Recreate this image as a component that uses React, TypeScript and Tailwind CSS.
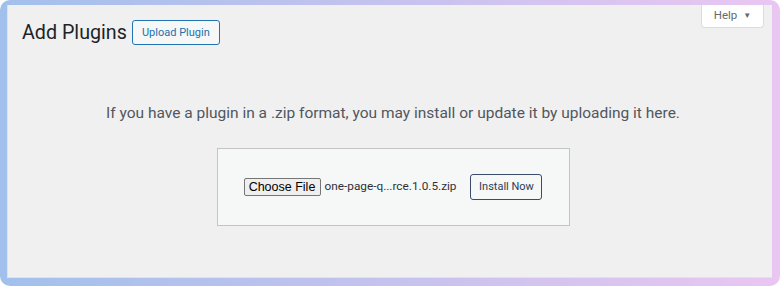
import React from "react";

export default function App() {
  const wp = { fontFamily: 'Roboto, "Noto Sans", Arial, sans-serif' };
  return (
    <div className="w-[780px] h-[286px] rounded-[10px] pt-[5px] pl-[7px] pr-[8px] pb-[8px] bg-gradient-to-r from-[#a2c0ec] via-[#c5c2ee] to-[#eac6f2]">
      <div className="w-full h-full bg-[#f0f0f1] border-l border-b border-[#e2e2e4] flex flex-col" style={wp}>
        <div className="flex items-start justify-between">
          <div className="flex items-center gap-[5px] pl-[14px] pt-[15px]">
            <h1 className="text-[19.7px] leading-[25px] text-[#1d2327] font-normal">Add Plugins</h1>
            <button className="h-[25px] w-[88px] border border-[#2271b1] rounded-[3px] bg-[#f6f7f7] text-[#2271b1] text-[11px] leading-[23px]">
              Upload Plugin
            </button>
          </div>
          <div className="mr-[8px] w-[63px] h-[23px] bg-white border border-t-0 border-[#dcdcde] rounded-b-[4px] flex items-center justify-center gap-[6px] text-[11.5px] text-[#646970]">
            <span>Help</span>
            <span className="text-[8px]">▼</span>
          </div>
        </div>
        <div className="pl-[6px] flex flex-col items-center">
          <p className="mt-[56px] text-[15.5px] leading-[24px] text-[#50575e]">
            If you have a plugin in a .zip format, you may install or update it by uploading it here.
          </p>
          <div className="mt-[23px] w-[353px] h-[78px] bg-[#f6f7f7] border border-[#c3c4c7] flex items-center justify-center">
            <div className="flex items-center">
              <button className="h-[18px] w-[77px] bg-[#efefef] border border-[#767676] rounded-[2px] text-[12.5px] leading-[16px] text-black" style={{ fontFamily: '"Liberation Sans", Arial, sans-serif' }}>
                Choose File
              </button>
              <span className="ml-[4px] text-[11.8px] text-[#2c3338]">one-page-q...rce.1.0.5.zip</span>
              <button className="ml-[14px] h-[26px] w-[72px] border border-[#3c4a6b] rounded-[3px] bg-[#f6f7f7] text-[11px] text-[#2c3e5a]">
                Install Now
              </button>
            </div>
          </div>
        </div>
      </div>
    </div>
  );
}
